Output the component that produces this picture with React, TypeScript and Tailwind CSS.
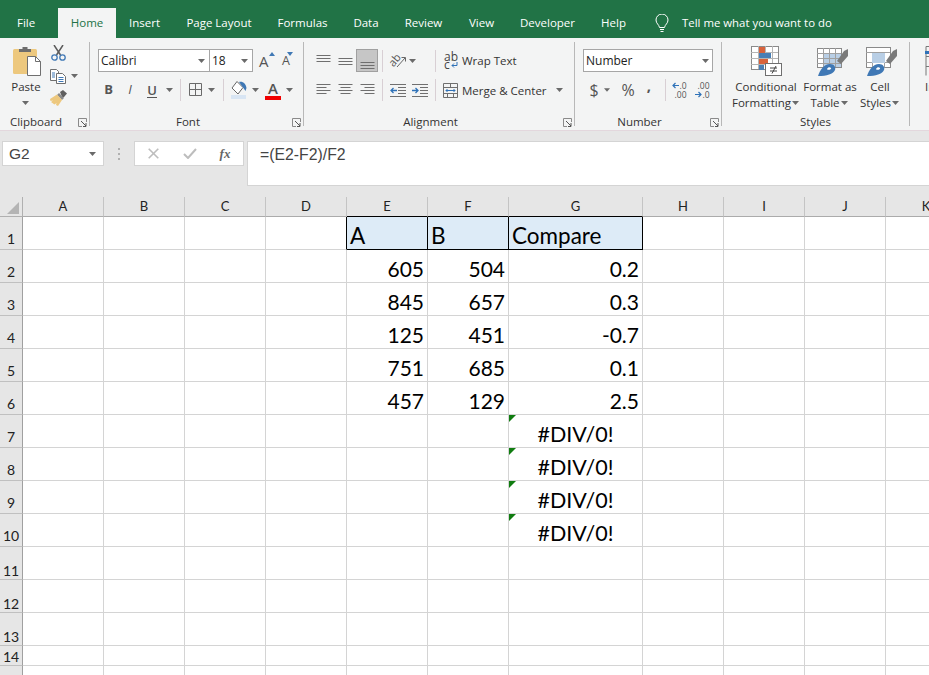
import React from "react";

const Caret = ({ w = 12 }: { w?: number }) => (
  <div className="flex shrink-0 items-center justify-center" style={{ width: w }}>
    <svg width="7" height="4" viewBox="0 0 7 4"><path d="M0 0h7L3.5 4z" fill="#6a6a6a" /></svg>
  </div>
);
const Slot = ({ w, ml = 0, children }: { w: number; ml?: number; children: React.ReactNode }) => (
  <div className="flex h-full shrink-0 items-center justify-center" style={{ width: w, marginLeft: ml }}>{children}</div>
);
const VSep = ({ ml }: { ml: number }) => <div className="h-[22px] w-px shrink-0 bg-[#d8cfd4]" style={{ marginLeft: ml }} />;

const Launcher = () => (
  <svg width="9" height="9" viewBox="0 0 9 9" className="ml-[6px]" fill="none">
    <path d="M8.5 4V.5H.5v8H4" stroke="#8a8a8a" />
    <path d="M3 3l5 5M8 5v3.500H5" stroke="#555" />
  </svg>
);

function Group({ w, label, launcher = true, children }: { w: number; label: string; launcher?: boolean; children: React.ReactNode }) {
  return (
    <div className="mt-[4px] h-[84px] shrink-0 border-r border-[#b8b8b8]" style={{ width: w }}>
      <div className="h-[74px]">{children}</div>
      <div className="flex h-[12px] items-center">
        <div className="flex-1 text-center text-[11.5px] leading-[12px] text-[#333]">{label}</div>
        {launcher && <div className="flex w-[17px] shrink-0"><Launcher /></div>}
      </div>
    </div>
  );
}

const Lines = ({ ys, widths, align = "l" }: { ys: number[]; widths: number[]; align?: "l" | "c" | "r" }) => (
  <svg width="15" height="16" viewBox="0 0 15 16">
    {ys.map((y, i) => {
      const w = widths[i];
      const x = align === "l" ? 0.5 : align === "r" ? 14.5 - w : (15 - w) / 2;
      return <path key={i} d={`M${x} ${y}.5h${w}`} stroke="#6f6f6f" />;
    })}
  </svg>
);

const PasteIcon = () => (
  <svg width="29" height="30" viewBox="0 0 29 30">
    <rect x="0" y="3" width="24" height="25" rx="1.500" fill="#edc87e" />
    <path d="M6 6V3h3.500V1h5v2H18v3z" fill="#6d6d6d" />
    <path d="M14.500 10.500h8l5 5v14h-13z" fill="#fff" stroke="#6f6f6f" />
    <path d="M22.500 10.500v5h5" fill="none" stroke="#6f6f6f" />
  </svg>
);
const Scissors = () => (
  <svg width="15" height="16" viewBox="0 0 15 16" fill="none">
    <path d="M3 0l6.500 10M12 0L5.500 10" stroke="#5b5b5b" strokeWidth="1.500" />
    <circle cx="3.500" cy="12.500" r="2.700" stroke="#3f78b5" strokeWidth="1.300" />
    <circle cx="11.500" cy="12.500" r="2.700" stroke="#3f78b5" strokeWidth="1.300" />
  </svg>
);
const Copy = () => (
  <svg width="16" height="15" viewBox="0 0 16 15" fill="none">
    <path d="M.5.500h6l2 2v9h-8z" fill="#fff" stroke="#6f6f6f" />
    <path d="M6.500 4.500h6l3 3v7h-9z" fill="#fff" stroke="#6f6f6f" />
    <path d="M2 4h3M2 6h3M2 8h3M8.500 8.500h5M8.500 10.500h5M8.500 12.500h5" stroke="#3f78b5" />
  </svg>
);
const Brush = () => (
  <svg width="17" height="16" viewBox="0 0 17 16">
    <path d="M10 2l3-2 4 3.500-3 3.500-1.500 1z" fill="#5f5f5f" />
    <path d="M9 3l5 5-2 2-5-5z" fill="#8a8a8a" />
    <path d="M7 4.500l5 5.500-4 6-2-1 .5-2-2 1.500L1 12l2-1.500-2.500.5L0 9z" fill="#edc87e" />
  </svg>
);
const Grow = ({ up }: { up: boolean }) => (
  <div className="flex items-start">
    <span className={up ? "text-[15px] leading-[20px] text-[#555]" : "text-[12.5px] leading-[20px] text-[#555]"}>A</span>
    <svg width="6" height="4" viewBox="0 0 6 4" className={up ? "mt-[1px]" : "ml-[-3px] mt-[1px]"}>
      <path d={up ? "M0 4l3-4 3 4z" : "M0 0h6L3 4z"} fill="#3f78b5" />
    </svg>
  </div>
);
const Borders = () => (
  <svg width="14" height="14" viewBox="0 0 14 14" fill="none"><path d="M.5.500h12v12h-12zM6.500.500v12M.5 6.500h12" stroke="#6a6a6a" /></svg>
);
const Fill = () => (
  <svg width="16" height="18" viewBox="0 0 16 18">
    <rect x="0" y="14" width="15" height="4" fill="#d8e5f3" />
    <path d="M6 .5l6 6-5 6.500-6-6z" fill="#fff" stroke="#666" />
    <path d="M8 1c4-1 7 2 7.500 6l-1 3-2.500-3.500z" fill="#3f78b5" />
  </svg>
);
const FontColor = () => (
  <div className="flex flex-col items-center">
    <span className="text-[15px] font-semibold leading-[14px] text-[#555]">A</span>
    <div className="mt-[1px] h-[4px] w-[16px] bg-[#f00000]" />
  </div>
);
const Orientation = () => (
  <svg width="17" height="17" viewBox="0 0 17 17" fill="none" className="overflow-visible">
    <text x="-1" y="12" fontSize="11" fill="#555" fontFamily="Open Sans, sans-serif" transform="rotate(-50 5 9)">ab</text>
    <path d="M7 15L15 6M11.500 5.500H15.500V9.500" stroke="#666" />
  </svg>
);
const Indent = ({ rev }: { rev: boolean }) => (
  <svg width="16" height="13" viewBox="0 0 16 13" fill="none">
    <path d="M0 .5h16M8 3.500h8M8 6.500h8M8 9.500h8M0 12.500h16" stroke="#6f6f6f" />
    <path d={rev ? "M1 6.500h6M3.500 4L1 6.500 3.500 9" : "M0 6.500h6M3.500 4L6 6.500 3.500 9"} stroke="#2f72b8" strokeWidth="1.300" />
  </svg>
);
const Merge = () => (
  <svg width="15" height="15" viewBox="0 0 15 15" fill="none">
    <path d="M.5.500h14v14H.5zM.5 4.500h14M.5 10.500h14M7.500.500v4M4.500 10.500v4M10.500 10.500v4" stroke="#6f6f6f" />
    <path d="M3 7.500h9M4.500 6L3 7.500 4.500 9M10.500 6L12 7.500 10.500 9" stroke="#2f72b8" />
  </svg>
);
const WrapIcon = () => (
  <div className="w-[14px] text-[12px] leading-[8px] text-[#444]">
    <div className="h-[8px]">ab</div>
    <div className="flex h-[8px] items-center">c<svg width="7" height="6" viewBox="0 0 7 6" fill="none" className="ml-[1px]"><path d="M6 0v3.500H1M3 1.500L1 3.500l2 2" stroke="#2f72b8" /></svg></div>
  </div>
);
const Dec = ({ more }: { more: boolean }) => (
  <div className="flex flex-col text-[8.5px] leading-[9px] text-[#555]">
    <div className="flex items-center justify-end">
      {more ? <span>.00</span> : <><svg width="7" height="7" viewBox="0 0 7 7" fill="none"><path d="M7 3.500H1M3.500 1L1 3.500 3.500 6" stroke="#2f72b8" strokeWidth="1.200" /></svg><span>.0</span></>}
    </div>
    <div className="flex items-center justify-end">
      {more ? <><svg width="7" height="7" viewBox="0 0 7 7" fill="none"><path d="M0 3.500h6M3.500 1L6 3.500 3.500 6" stroke="#2f72b8" strokeWidth="1.200" /></svg><span>.0</span></> : <span>.00</span>}
    </div>
  </div>
);
const CondFmt = () => (
  <svg width="31" height="30" viewBox="0 0 31 30" fill="none">
    <rect x=".5" y=".5" width="27" height="23" fill="#fff" stroke="#8a8a8a" />
    <path d="M7.500 0v23M14.500 0v23M21.500 0v23M0 6.500h27M0 12.500h27M0 18.500h27" stroke="#b5b5b5" />
    <rect x="8" y="1" width="6" height="6" fill="#d9633c" />
    <rect x="8" y="7" width="12" height="5" fill="#4a7fb5" />
    <rect x="8" y="13" width="9" height="5" fill="#d9633c" />
    <rect x="8" y="19" width="5" height="5" fill="#4a7fb5" />
    <rect x="14.500" y="17.500" width="16" height="12" fill="#fff" stroke="#6f6f6f" />
    <path d="M19 22h7M19 25h7M25 20l-4 7.500" stroke="#444" />
  </svg>
);
const PaintTail = () => (
  <>
    <path d="M27 5l4-2v7l-7 8-4-3z" fill="#7a7a7a" />
    <path d="M1 30c2-6 6-12 12-12 4 0 6 3 5 6-2 4-8 6-17 6z" fill="#3f78b5" />
    <path d="M10 23c1-2 3-2 4-1s-3 3-4 1z" fill="#fff" />
  </>
);
const FmtTable = () => (
  <svg width="31" height="30" viewBox="0 0 31 30" fill="none">
    <g transform="translate(0 2)">
      <rect x=".5" y=".5" width="24" height="19" fill="#fff" stroke="#8a8a8a" />
      <rect x="6" y="5" width="18" height="14" fill="#b9cfe6" />
      <path d="M6.500 0v19M12.500 0v19M18.500 0v19M0 5.500h24M0 10.500h24M0 15.500h24" stroke="#a0a0a0" />
    </g>
    <PaintTail />
  </svg>
);
const CellStyles = () => (
  <svg width="31" height="30" viewBox="0 0 31 30" fill="none">
    <g transform="translate(0 1)">
      <rect x=".5" y=".5" width="24" height="20" fill="#fff" stroke="#8a8a8a" />
      <path d="M0 5.500h24M6.500 5.500v15M18.500 5.500v15M0 15.500h24" stroke="#a0a0a0" />
      <rect x="6" y="6" width="13" height="10" fill="#b9cfe6" />
    </g>
    <PaintTail />
  </svg>
);
const InsertIcon = () => (
  <svg width="20" height="30" viewBox="0 0 20 30" fill="none">
    <path d="M1 .5h16M1 10.500h16M1 20.500h16M1 .5v29M9 0v30" stroke="#777" />
    <path d="M0 6.500h7" stroke="#2f72b8" strokeWidth="3" />
  </svg>
);

const tabs: [string, string][] = [
  ["Insert", "w-[57px]"], ["Page Layout", "w-[92px]"], ["Formulas", "w-[75px]"], ["Data", "w-[52px]"],
  ["Review", "w-[63px]"], ["View", "w-[53px]"], ["Developer", "w-[79px]"], ["Help", "w-[53px]"],
];

const cols = ["A", "B", "C", "D", "E", "F", "G", "H", "I", "J", "K"];
const data: Record<number, [string, string, string]> = {
  2: ["605", "504", "0.2"], 3: ["845", "657", "0.3"], 4: ["125", "451", "-0.7"], 5: ["751", "685", "0.1"], 6: ["457", "129", "2.5"],
  7: ["", "", "#DIV/0!"], 8: ["", "", "#DIV/0!"], 9: ["", "", "#DIV/0!"], 10: ["", "", "#DIV/0!"],
};
const head: Record<string, string> = { E: "A", F: "B", G: "Compare" };

function Cell({ r, c }: { r: number; c: string }) {
  if (r === 1 && head[c]) {
    return (
      <div className="flex items-end border-r border-b border-black bg-[#ddebf7] pl-[3px] font-['Lato',sans-serif] text-[22.5px] leading-[26px] text-black">{head[c]}</div>
    );
  }
  const idx = c === "E" ? 0 : c === "F" ? 1 : c === "G" ? 2 : -1;
  const v = idx >= 0 && data[r] ? data[r][idx] : "";
  const isErr = v === "#DIV/0!";
  const rightBlack = r === 1 && c === "D";
  return (
    <div className={`relative flex items-end border-b border-r border-b-[#d4d4d4] font-['Lato',sans-serif] leading-[26px] text-black ${rightBlack ? "border-r-black" : "border-r-[#d4d4d4]"} ${isErr ? "justify-center text-[21.5px]" : "justify-end pr-[3px] text-[21px]"}`}>
      {isErr && (
        <svg width="7" height="7" viewBox="0 0 7 7" className="absolute left-0 top-0"><path d="M0 0h7L0 7z" fill="#107c10" /></svg>
      )}
      {v}
    </div>
  );
}

export default function App() {
  const rows = Array.from({ length: 15 }, (_, i) => i + 1);
  return (
    <div className="h-[675px] w-full overflow-hidden bg-white font-['Open_Sans',sans-serif]">
      {/* Tabs */}
      <div className="flex h-[38px] items-end bg-[#217346] text-[11.5px] text-white">
        <div className="flex h-[30px] w-[58px] items-center pl-[17px]">File</div>
        <div className="flex h-[30px] w-[58px] items-center justify-center bg-[#f3f4f4] text-[#217346]">Home</div>
        {tabs.map(([t, w]) => (
          <div key={t} className={`flex h-[30px] items-center justify-center ${w}`}>{t}</div>
        ))}
        <div className="ml-[15px] flex h-[30px] items-center">
          <svg width="14" height="19" viewBox="0 0 14 19" fill="none" stroke="#fff">
            <path d="M4.500 13.500C4 10.500 1 9.500 1 6a6 6 0 0 1 12 0c0 3.500-3 4.500-3.500 7.500zM5 15.500h4M5.500 17.500h3" />
          </svg>
          <span className="ml-[13px] text-[11.4px]">Tell me what you want to do</span>
        </div>
      </div>

      {/* Ribbon */}
      <div className="flex h-[93px] overflow-hidden border-b border-[#e3d7dd] bg-[#f3f4f4] text-[#333]">
        <Group w={90} label="Clipboard">
          <div className="flex h-full">
            <div className="flex w-[50px] flex-col items-center">
              <div className="mt-[4px] flex h-[30px] w-full justify-center pl-[5px]"><PasteIcon /></div>
              <div className="mt-[3px] w-full pl-[2px] text-center text-[11.5px] leading-[16px]">Paste</div>
              <div className="mt-[5px] flex h-[6px] w-full items-center justify-center"><Caret w={8} /></div>
            </div>
            <div className="flex flex-col">
              <div className="flex h-[22px] items-center pl-[1px]"><Scissors /></div>
              <div className="flex h-[24px] items-center"><Copy /><Caret w={16} /></div>
              <div className="flex h-[20px] items-center"><Brush /></div>
            </div>
          </div>
        </Group>

        <Group w={214} label="Font">
          <div className="pl-[8px] pt-[7px]">
            <div className="flex h-[23px] items-center">
              <div className="flex h-[23px] w-[112px] items-center justify-between border border-[#a6a6a6] bg-white pl-[2px] pr-[3px] text-[12px] text-[#222]">
                <span>Calibri</span><Caret w={10} />
              </div>
              <div className="ml-[-1px] flex h-[23px] w-[44px] items-center justify-between border border-[#a6a6a6] bg-white pl-[2px] pr-[3px] text-[12px] text-[#222]">
                <span>18</span><Caret w={10} />
              </div>
              <div className="ml-[6px] w-[23px]"><Grow up /></div>
              <div className="w-[14px]"><Grow up={false} /></div>
            </div>
            <div className="mt-[7px] flex h-[22px] items-center text-[#555]">
              <Slot w={21}><span className="text-[13px] font-bold">B</span></Slot>
              <Slot w={22}><span className="text-[13px] italic">I</span></Slot>
              <Slot w={22}><span className="border-b border-[#555] text-[13px] font-semibold leading-[14px]">U</span></Slot>
              <Caret w={12} />
              <VSep ml={5} />
              <Slot w={16} ml={7}><Borders /></Slot>
              <Caret w={14} />
              <VSep ml={5} />
              <Slot w={16} ml={7}><Fill /></Slot>
              <Caret w={16} />
              <Slot w={16} ml={2}><FontColor /></Slot>
              <Caret w={16} />
            </div>
          </div>
        </Group>

        <Group w={271} label="Alignment">
          <div className="pt-[7px]">
            <div className="flex h-[23px] items-center">
              <Slot w={22} ml={8}><Lines ys={[2, 5, 8]} widths={[14, 14, 14]} /></Slot>
              <Slot w={22}><Lines ys={[5, 8, 11]} widths={[14, 14, 14]} /></Slot>
              <Slot w={22}>
                <div className="flex h-[23px] w-[22px] items-center justify-center border border-[#a0a0a0] bg-[#c6c6c6]">
                  <Lines ys={[9, 12, 15]} widths={[14, 14, 14]} />
                </div>
              </Slot>
              <VSep ml={4} />
              <Slot w={17} ml={7}><Orientation /></Slot>
              <Caret w={11} />
              <VSep ml={17} />
              <Slot w={14} ml={8}><WrapIcon /></Slot>
              <span className="ml-[4px] text-[11.5px]">Wrap Text</span>
            </div>
            <div className="mt-[7px] flex h-[22px] items-center">
              <Slot w={22} ml={8}><Lines ys={[2, 5, 8, 11]} widths={[14, 10, 14, 10]} /></Slot>
              <Slot w={22}><Lines ys={[2, 5, 8, 11]} widths={[14, 10, 14, 10]} align="c" /></Slot>
              <Slot w={22}><Lines ys={[2, 5, 8, 11]} widths={[14, 10, 14, 10]} align="r" /></Slot>
              <VSep ml={4} />
              <Slot w={16} ml={7}><Indent rev /></Slot>
              <Slot w={16} ml={6}><Indent rev={false} /></Slot>
              <VSep ml={7} />
              <Slot w={15} ml={7}><Merge /></Slot>
              <span className="ml-[4px] w-[91px] shrink-0 pt-[2px] text-[11.5px]">Merge &amp; Center</span>
              <Caret w={12} />
            </div>
          </div>
        </Group>

        <Group w={147} label="Number">
          <div className="pl-[8px] pt-[7px]">
            <div className="flex h-[23px] w-[130px] items-center justify-between border border-[#a6a6a6] bg-white pl-[2px] pr-[2px] text-[12px] text-[#222]">
              <span>Number</span><Caret w={10} />
            </div>
            <div className="mt-[7px] flex h-[22px] items-center text-[#555]">
              <Slot w={20} ml={1}><span className="text-[16px]">$</span></Slot>
              <Caret w={6} />
              <Slot w={20} ml={8}><span className="text-[16px]">%</span></Slot>
              <Slot w={20} ml={1}><span className="mb-[10px] text-[15px] font-bold leading-[15px]">,</span></Slot>
              <VSep ml={6} />
              <Slot w={15} ml={6}><Dec more={false} /></Slot>
              <Slot w={15} ml={8}><Dec more /></Slot>
            </div>
          </div>
        </Group>

        <Group w={188} label="Styles" launcher={false}>
          <div className="flex pl-[7px] pt-[4px] text-center text-[11.5px] leading-[16px]">
            <div className="flex w-[74px] shrink-0 flex-col items-center">
              <CondFmt />
              <div className="mt-[3px] whitespace-nowrap">Conditional</div>
              <div className="flex items-center whitespace-nowrap">Formatting<Caret w={9} /></div>
            </div>
            <div className="flex w-[54px] shrink-0 flex-col items-center">
              <div className="pl-[4px]"><FmtTable /></div>
              <div className="mt-[3px] whitespace-nowrap">Format as</div>
              <div className="flex items-center whitespace-nowrap">Table<Caret w={10} /></div>
            </div>
            <div className="flex w-[46px] shrink-0 flex-col items-center">
              <div className="pl-[3px]"><CellStyles /></div>
              <div className="mt-[3px] whitespace-nowrap">Cell</div>
              <div className="flex items-center whitespace-nowrap">Styles<Caret w={9} /></div>
            </div>
          </div>
        </Group>

        <div className="ml-[15px] mt-[8px] flex flex-col text-[11.5px] leading-[16px]">
          <InsertIcon />
          <div className="mt-[3px]">Insert</div>
        </div>
      </div>

      {/* Formula bar */}
      <div className="flex h-[66px] items-start bg-[#e6e6e6] pt-[10px]">
        <div className="ml-[2px] flex h-[25px] w-[102px] items-center justify-between border border-[#d4d4d4] bg-white pl-[6px] pr-[6px] font-['Liberation_Sans',sans-serif] text-[15.5px] text-[#444]">
          <span>G2</span><Caret w={10} />
        </div>
        <div className="flex h-[25px] w-[30px] items-center justify-center">
          <svg width="3" height="12" viewBox="0 0 3 12" fill="#b0b0b0"><rect width="2" height="2" /><rect y="5" width="2" height="2" /><rect y="10" width="2" height="2" /></svg>
        </div>
        <div className="flex h-[25px] w-[110px] items-center border border-[#d4d4d4] bg-white">
          <Slot w={12} ml={12}>
            <svg width="11" height="11" viewBox="0 0 11 11" fill="none"><path d="M.7.700l9.600 9.600M10.300.700L.7 10.300" stroke="#bdbdbd" strokeWidth="1.600" /></svg>
          </Slot>
          <Slot w={14} ml={24}>
            <svg width="14" height="11" viewBox="0 0 14 11" fill="none"><path d="M1 6l4 4 8-9" stroke="#bdbdbd" strokeWidth="2" /></svg>
          </Slot>
          <Slot w={14} ml={21}>
            <span className="font-['Liberation_Serif',serif] text-[13px] font-bold italic leading-none text-[#666]">fx</span>
          </Slot>
        </div>
        <div className="ml-[3px] flex h-[45px] flex-1 items-start border border-r-0 border-[#d4d4d4] bg-white pl-[12px] pt-[3px] font-['Liberation_Sans',sans-serif] text-[15.8px] leading-[20px] text-[#444]">
          =(E2-F2)/F2
        </div>
      </div>

      {/* Sheet */}
      <div className="grid grid-cols-[23px_81px_81px_81px_81px_81px_81px_134px_81px_81px_81px_81px] overflow-hidden">
        <div className="flex h-[20px] items-end justify-end border-r border-b border-[#b0b0b0] bg-[#e6e6e6] pb-[2px] pr-[3px]">
          <svg width="12" height="12" viewBox="0 0 12 12"><path d="M12 0v12H0z" fill="#b4b4b4" /></svg>
        </div>
        {cols.map((c) => (
          <div
            key={c}
            className={`flex h-[20px] items-center justify-center border-r border-b border-r-[#c4c4c4] bg-[#e6e6e6] pt-[1px] font-['Lato',sans-serif] text-[13px] text-[#222] ${c === "E" || c === "F" || c === "G" ? "border-b-black" : "border-b-[#ababab]"}`}
          >
            {c}
          </div>
        ))}
        {rows.map((r) => (
          <React.Fragment key={r}>
            <div className={`flex items-end justify-center border-r border-b border-r-[#a0a0a0] border-b-[#c0c0c0] bg-[#e6e6e6] font-['Lato',sans-serif] text-[14px] text-[#222] ${r === 14 ? "h-[20px]" : "h-[33px]"} ${r >= 11 ? "leading-[17px]" : "leading-[20px]"}`}>
              {r}
            </div>
            {cols.map((c) => <Cell key={c} r={r} c={c} />)}
          </React.Fragment>
        ))}
      </div>
    </div>
  );
}
